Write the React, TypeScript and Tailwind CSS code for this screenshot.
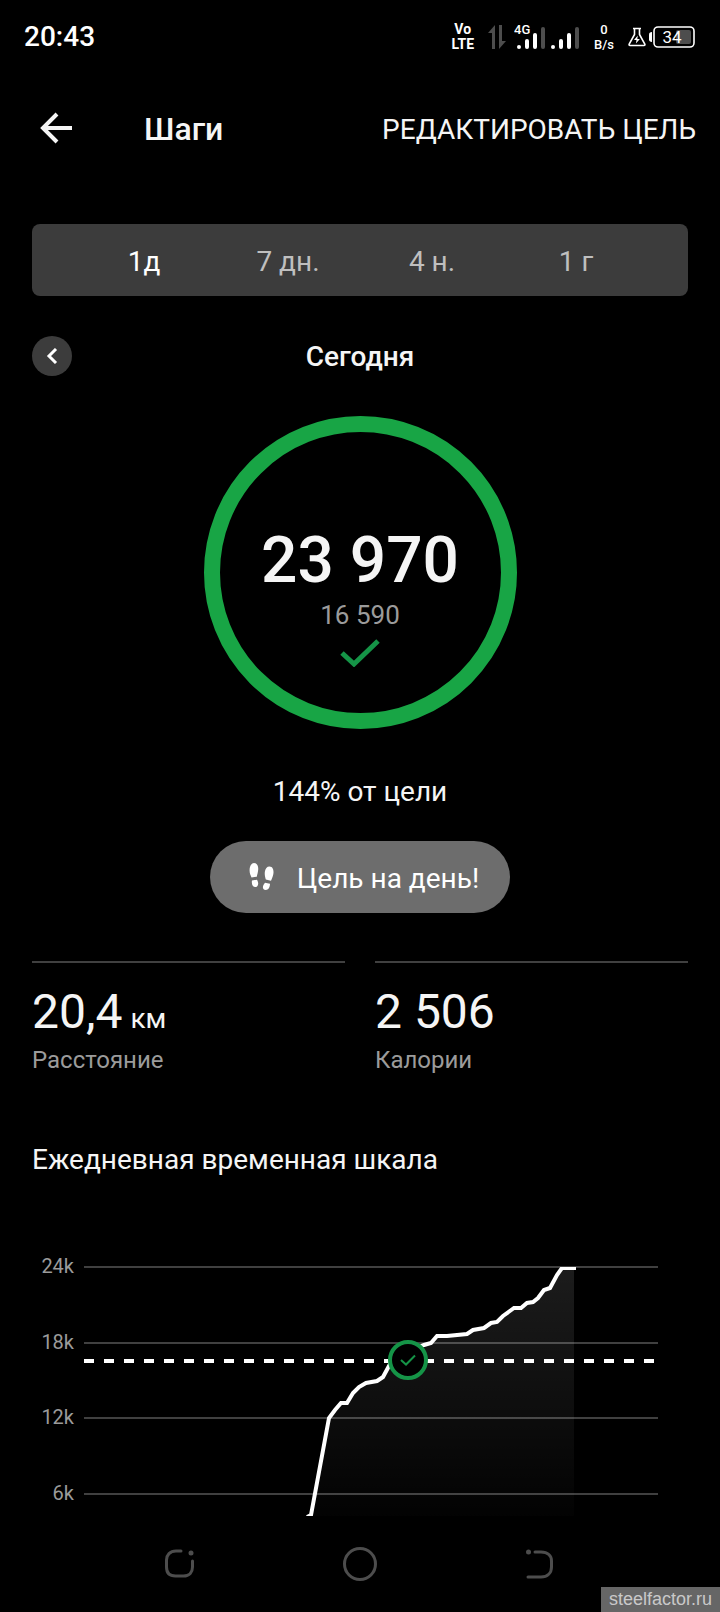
import { useState } from 'react';

const periods = ['1д', '7 дн.', '4 н.', '1 г'];

const stats = [
  { value: '20,4', unit: 'км', label: 'Расстояние' },
  { value: '2 506', unit: '', label: 'Калории' },
];

const gridLines = [
  { label: '24k', y: 17 },
  { label: '18k', y: 93 },
  { label: '12k', y: 168 },
  { label: '6k', y: 244 },
];

const linePoints =
  '307,267 311,265 329,168 335,160 341,153 347,153 353,143 359,137 366,133 377,131 383,127 390,114 400,106 414,99 424,95 431,93 437,86 447,86 467,84 473,80 484,78 491,73 497,72 503,66 514,58 521,58 527,53 533,52 538,48 544,40 550,38 557,25 562,18 576,18';

function StatusBar() {
  return (
    <div className="flex h-[74px] items-center justify-between pl-6 pr-[25px]">
      <span className="text-[28px] font-medium leading-8 text-white">20:43</span>
      <div className="flex items-center gap-[14px]">
        <div className="flex flex-col items-center text-[14px] font-bold leading-[15px] text-white">
          <span>Vo</span>
          <span>LTE</span>
        </div>
        <div className="flex items-center gap-2">
          <svg viewBox="0 0 18 26" className="h-[26px] w-[18px]" fill="#4d4d4d" aria-hidden="true">
            <path d="M7 1v24H4V9H0z" />
            <path d="M11 25V1h3v16h4z" />
          </svg>
          <svg viewBox="0 0 66 30" className="h-[30px] w-[66px]" fill="#fff" aria-hidden="true">
            <text x="0" y="12" fontSize="13" fontWeight="500">4G</text>
            <rect x="3" y="23" width="4" height="4" rx="2" />
            <rect x="11" y="17" width="4" height="10" rx="2" />
            <rect x="19" y="11" width="4" height="16" rx="2" />
            <rect x="27" y="5" width="4" height="22" rx="2" fill="#4d4d4d" />
            <rect x="37" y="23" width="4" height="4" rx="2" />
            <rect x="45" y="17" width="4" height="10" rx="2" />
            <rect x="53" y="11" width="4" height="16" rx="2" />
            <rect x="61" y="5" width="4" height="22" rx="2" fill="#4d4d4d" />
          </svg>
        </div>
        <div className="flex flex-col items-center text-[13px] font-medium leading-[15px] text-white">
          <span>0</span>
          <span>B/s</span>
        </div>
        <div className="flex items-center gap-[3px]">
          <svg viewBox="0 0 18 20" className="h-5 w-[18px]" fill="none" stroke="#fff" strokeWidth="1.6" aria-hidden="true">
            <path d="M5 1.5h8M6.500 1.5v6L1.200 17c-.4.9 0 1.5.8 1.5h14c.8 0 1.2-.6.8-1.5L11.500 7.500v-6" />
            <path d="M9.800 8.500 6 13h2.500l-.6 3.500 4-4.500H9.300z" fill="#fff" stroke="none" />
          </svg>
          <svg viewBox="0 0 46 22" className="h-[22px] w-[46px]" aria-hidden="true">
            <path d="M3 6v10c-2 0-3-1-3-2.500v-5C0 7 1 6 3 6z" fill="#fff" />
            <rect x="27" y="4" width="15" height="14" rx="2" fill="#4d4d4d" />
            <rect x="5" y="1" width="40" height="20" rx="4" fill="none" stroke="#fff" strokeWidth="1.6" />
            <text x="23" y="17" fontSize="17" textAnchor="middle" fill="#fff">34</text>
          </svg>
        </div>
      </div>
    </div>
  );
}

function Header() {
  return (
    <header className="flex h-[108px] items-center pl-10 pr-6">
      <button type="button" aria-label="Назад" className="mr-[72px]">
        <svg viewBox="0 0 32 32" className="size-8" fill="none" stroke="#f5f5f5" strokeWidth="4">
          <path d="M17 2 3 16l14 14M3 16h29" />
        </svg>
      </button>
      <h1 className="pt-0.5 text-[32px] font-medium leading-10">Шаги</h1>
      <button type="button" className="ml-auto whitespace-nowrap pt-1 text-[28px] leading-8">
        РЕДАКТИРОВАТЬ ЦЕЛЬ
      </button>
    </header>
  );
}

function GoalRing() {
  return (
    <div className="mx-auto mt-10 flex size-[313px] flex-col items-center rounded-full border-[16px] border-[#18a545] pt-[93px]">
      <p className="whitespace-nowrap text-[64px] font-medium leading-[72px]">23 970</p>
      <p className="mt-0.5 text-[26px] leading-8 text-[#9b9b9b]">16 590</p>
      <svg viewBox="0 0 40 28" className="mt-2 h-7 w-10" fill="none" stroke="#159447" strokeWidth="5" aria-hidden="true">
        <path d="M2 14 14 25 38 2" />
      </svg>
    </div>
  );
}

function Timeline() {
  return (
    <svg viewBox="0 0 720 266" className="mt-[74px] block w-full" role="img" aria-label="Ежедневная временная шкала">
      <defs>
        <linearGradient id="area" x1="0" y1="0" x2="0" y2="1">
          <stop offset="0" stopColor="#fff" stopOpacity="0.11" />
          <stop offset="1" stopColor="#fff" stopOpacity="0.01" />
        </linearGradient>
        <clipPath id="plot">
          <rect x="84" y="17" width="574" height="249" />
        </clipPath>
      </defs>
      {gridLines.map((line) => (
        <g key={line.label}>
          <text x="74" y={line.y + 6} fontSize="20" textAnchor="end" fill="#9b9b9b">
            {line.label}
          </text>
          <path d={`M84 ${line.y}H658`} stroke="#404040" strokeWidth="2" />
        </g>
      ))}
      <g clipPath="url(#plot)">
        <polygon points={`${linePoints} 574,18 574,267`} fill="url(#area)" />
        <polyline points={linePoints} fill="none" stroke="#fff" strokeWidth="4" />
      </g>
      <path d="M84 111H658" stroke="#fff" strokeWidth="4" strokeDasharray="10 10" />
      <circle cx="408" cy="110" r="18" fill="#000" stroke="#159447" strokeWidth="4" />
      <path d="m401 110 5 4.500 9-9" fill="none" stroke="#159447" strokeWidth="2" />
    </svg>
  );
}

function NavBar() {
  return (
    <nav className="grid h-24 grid-cols-3 items-center justify-items-center px-[12.5%]">
      <button type="button" aria-label="Недавние">
        <svg viewBox="0 0 36 36" className="size-9" fill="none" stroke="#4d4d4d" strokeWidth="3" strokeLinecap="round">
          <path d="M19 5h-5C8 5 4.500 9 4.500 14v7c0 6 3.500 9 9 9h8c6 0 9-4 9-9v-6" />
          <circle cx="29" cy="7" r="2.500" fill="#4d4d4d" stroke="none" />
        </svg>
      </button>
      <button type="button" aria-label="Домой">
        <svg viewBox="0 0 36 36" className="size-9" fill="none" stroke="#4d4d4d" strokeWidth="3">
          <circle cx="18" cy="18" r="15.500" />
        </svg>
      </button>
      <button type="button" aria-label="Назад">
        <svg viewBox="0 0 36 36" className="size-9" fill="none" stroke="#4d4d4d" strokeWidth="3" strokeLinecap="round">
          <path d="M13 6h6c7 0 10.500 4 10.500 9v6c0 6-4 10-10.500 10H6" />
          <circle cx="6.500" cy="6" r="2.500" fill="#4d4d4d" stroke="none" />
        </svg>
      </button>
    </nav>
  );
}

export default function App() {
  const [period, setPeriod] = useState(periods[0]);

  return (
    <div className="relative min-h-screen bg-black font-[Roboto,sans-serif] text-[#f5f5f5]">
      <StatusBar />
      <Header />

      <main>
        <div className="px-8 pt-[42px]">
          <div className="grid h-[72px] grid-cols-4 rounded-lg bg-[#3c3c3c] px-10">
            {periods.map((item) => (
              <button
                key={item}
                type="button"
                aria-pressed={item === period}
                onClick={() => setPeriod(item)}
                className={`pt-1 text-[28px] leading-8 ${item === period ? 'text-white' : 'text-[#bfbfbf]'}`}
              >
                {item}
              </button>
            ))}
          </div>

          <div className="mt-10 grid grid-cols-[40px_1fr_40px] items-center">
            <button type="button" aria-label="Предыдущий день" className="flex size-10 items-center justify-center rounded-full bg-[#3c3c3c]">
              <svg viewBox="0 0 16 16" className="size-4" fill="none" stroke="#fff" strokeWidth="3">
                <path d="M12 1 5 8l7 7" />
              </svg>
            </button>
            <h2 className="pt-0.5 text-center text-[28px] font-medium leading-8">Сегодня</h2>
          </div>

          <GoalRing />

          <p className="mt-[47px] text-center text-[28px] leading-8">144% от цели</p>

          <button type="button" className="mx-auto mt-[33px] flex h-[72px] w-[300px] items-center justify-center gap-5 rounded-full bg-[#6d6d6d] pl-1 text-[28px] leading-8 text-white">
            <svg viewBox="0 0 32 32" className="size-8" fill="#fff" aria-hidden="true">
              <path d="M9 2c3 0 4.500 3 4.200 6.500-.2 3-1 5-1.400 7.200L6.500 16.500C5.500 14 4.500 12 4.600 9 4.700 5 6.500 2 9 2z" />
              <path d="M7 19.500l5-.8c1 2 1.500 3.500 1 5-.4 1.500-1.300 2.300-2.700 2.300-2.500 0-4-3-3.300-6.500z" />
              <path d="M24.500 5.500c3 0 4.200 3 4 6.300-.2 3-1.300 5.200-2.500 7.900l-5.200-1.200c-.6-2.500-1.300-4.500-1-7.500.4-3.500 2.200-5.500 4.700-5.500z" />
              <path d="M20 21.800l5 1c0 3.500-1.800 6.200-4.200 6.200-2.200 0-3.300-1.500-2.800-3.700.3-1.300 1-2.300 2-3.500z" />
            </svg>
            <span className="pt-1">Цель на день!</span>
          </button>

          <dl className="mt-12 grid grid-cols-2 gap-[30px]">
            {stats.map((stat) => (
              <div key={stat.label} className="flex flex-col-reverse border-t-2 border-[#404040] pt-[21px]">
                <dt className="mt-1.5 text-[24px] leading-7 text-[#9b9b9b]">{stat.label}</dt>
                <dd className="flex items-baseline gap-2 text-[48px] leading-[56px]">
                  {stat.value}
                  {stat.unit && <span className="text-[28px] leading-8">{stat.unit}</span>}
                </dd>
              </div>
            ))}
          </dl>

          <h2 className="mt-[70px] text-[28px] leading-8">Ежедневная временная шкала</h2>
        </div>

        <Timeline />
      </main>

      <NavBar />

      <a href="#" className="absolute bottom-0 right-0 bg-[#666] px-2 font-['Liberation_Sans',sans-serif] text-[18px] leading-[25px] text-[#c9c9c9]">
        steelfactor.ru
      </a>
    </div>
  );
}
